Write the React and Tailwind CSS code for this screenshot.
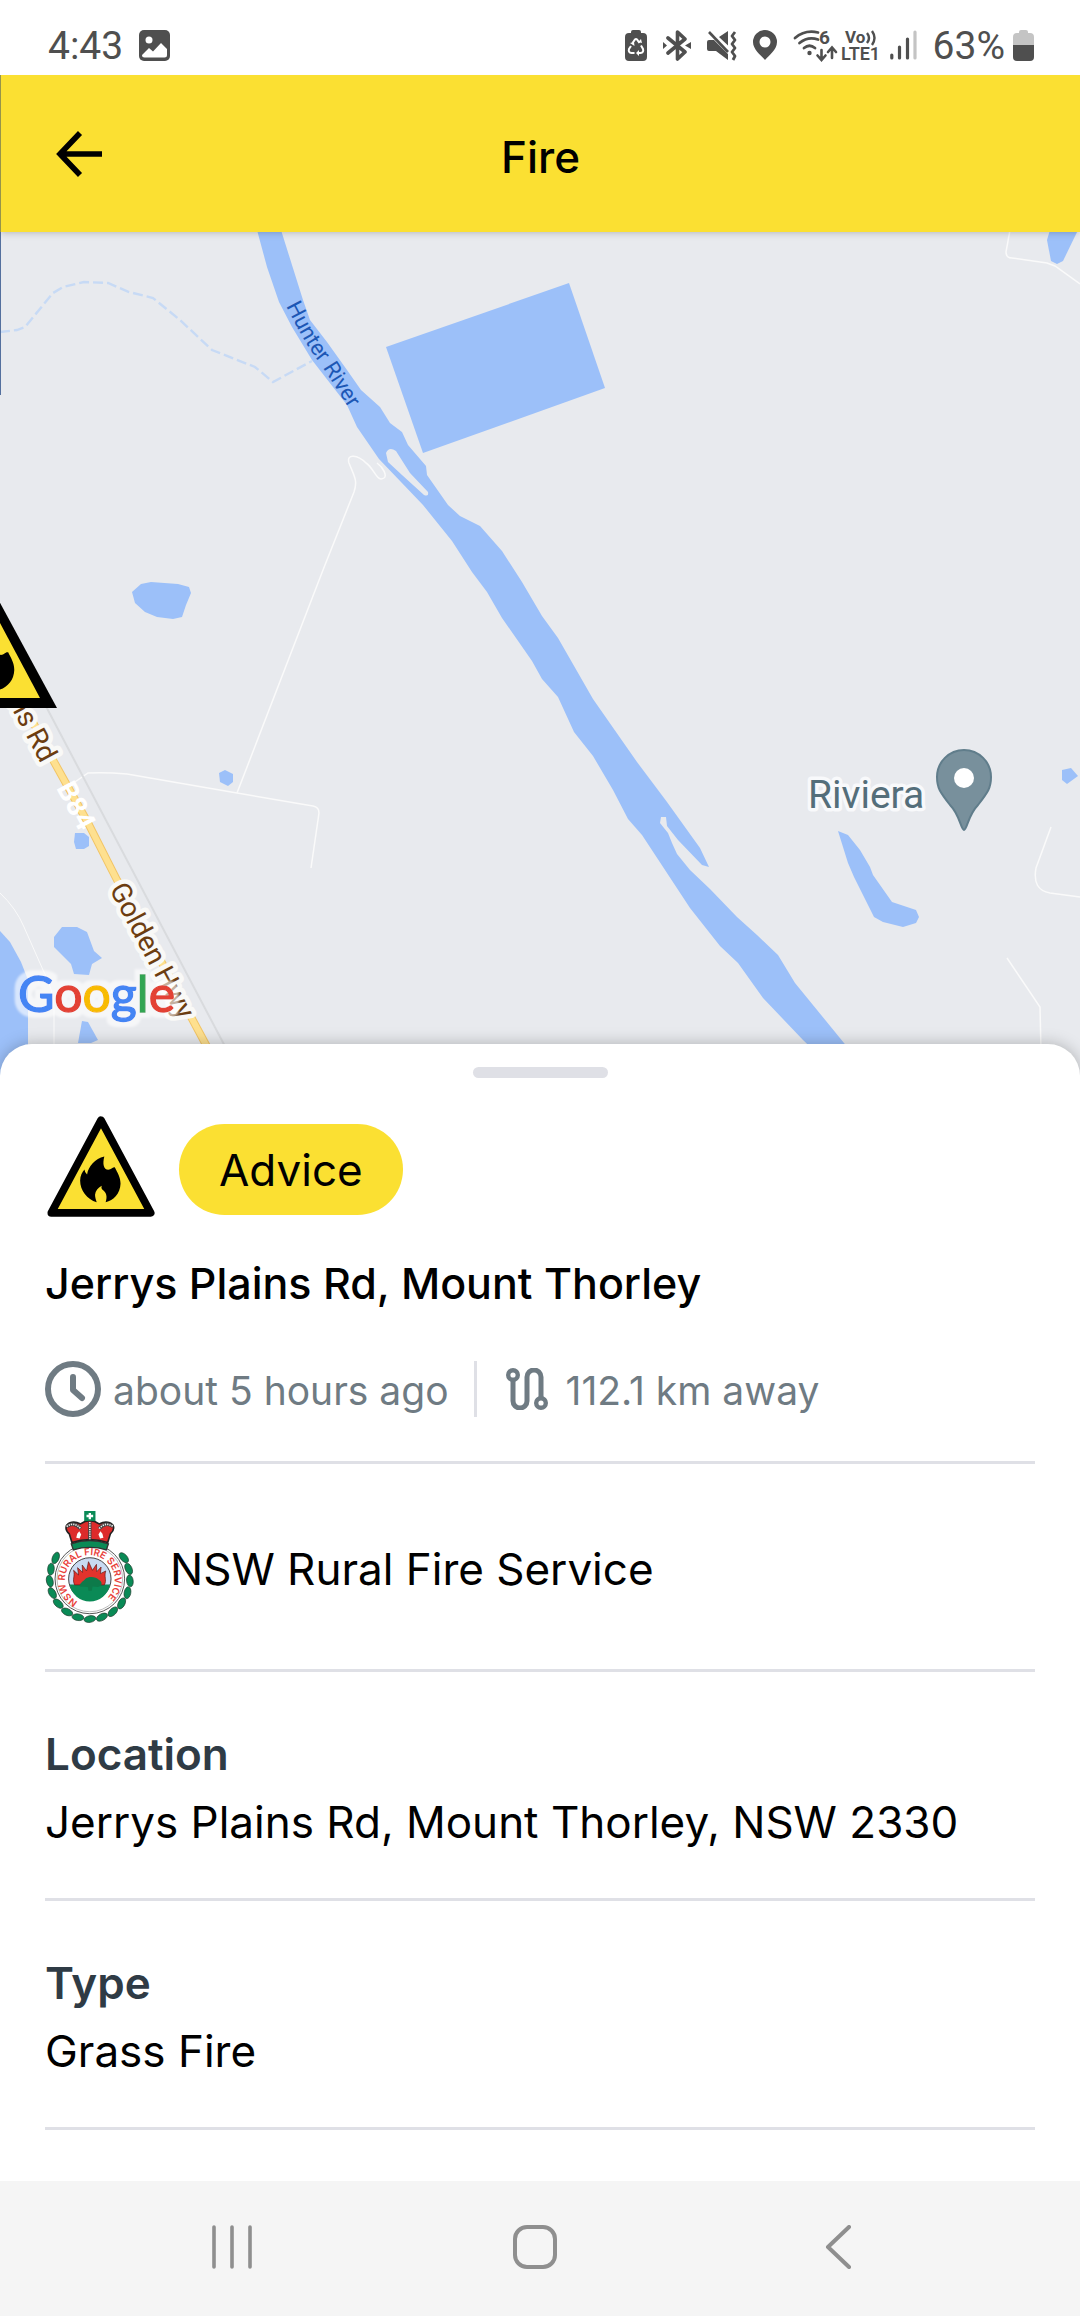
const water = '#9cc0f9'

function StatusBar () {
    return (
        <div className="flex h-[75px] items-center justify-between bg-white pt-4 pr-[46px] pl-12 font-[Roboto,sans-serif] text-[#4f4f4f]">
            <div className="flex items-center gap-4">
                <span className="text-[39px] leading-8">4:43</span>
                <svg viewBox="0 0 31 31" className="size-[31px]" aria-hidden="true">
                    <rect width="31" height="31" rx="5" fill="currentColor" />
                    <circle cx="10" cy="10" r="3.5" fill="#fff" />
                    <path d="M3 25 L10 18 L14 21.500 L22 13 L28 19 V25 Q28 27.500 25.500 27.500 H5.500 Q3 27.500 3 25Z" fill="#fff" />
                </svg>
            </div>
            <div className="flex items-center gap-4">
                <svg viewBox="0 0 22 31" className="h-[31px] w-[22px]" aria-hidden="true">
                    <path d="M6 3 V2 Q6 0 8 0 H14 Q16 0 16 2 V3 H18 Q22 3 22 7 V27 Q22 31 18 31 H4 Q0 31 0 27 V7 Q0 3 4 3Z" fill="currentColor" />
                    <g fill="none" stroke="#fff" strokeWidth="2">
                        <path d="M7.500 13 L10 9.500 Q11 8.500 12 9.500 L14.500 13" />
                        <path d="M16 15.500 L18 19 Q19 22.500 15.500 23 H13" />
                        <path d="M9.500 23 H6.500 Q3 22.500 4 19 L6 16" />
                    </g>
                    <path d="M5 13 L9 12 L9.500 16Z M14 20 L11 23 L14 26Z M13 12 L17 13 L16 9Z" fill="#fff" />
                </svg>
                <svg viewBox="0 0 28 31" className="h-[31px] w-7" aria-hidden="true">
                    <path d="M5 8 L22 22 L14.500 29 V2 L22 9 L5 23" fill="none" stroke="currentColor" strokeWidth="3.600" strokeLinecap="round" strokeLinejoin="round" />
                    <path d="M0 12 L4 15.500 L0 19Z M28 12 L22 15.500 L28 19Z" fill="currentColor" />
                </svg>
                <svg viewBox="0 0 30 31" className="h-[31px] w-[30px]" aria-hidden="true">
                    <path d="M0 12 Q0 10 2 10 H7 L21 24 V30 L9 21 H2 Q0 21 0 19Z M12 7 L21 1 V15.500Z" fill="currentColor" />
                    <path d="M2 2 L21 22" stroke="currentColor" strokeWidth="2.600" />
                    <path d="M28 2 L25 6 L28 10 L25 14 L28 18 L25 22 L28 26 L26 30" fill="none" stroke="currentColor" strokeWidth="2.800" strokeLinejoin="round" />
                </svg>
                <svg viewBox="0 0 24 31" className="h-[31px] w-6" aria-hidden="true">
                    <path d="M12 0 A12 12 0 0 1 24 12 C24 20 15 26 12 30 C9 26 0 20 0 12 A12 12 0 0 1 12 0Z M12 6.500 A5.500 5.500 0 1 0 12 17.500 A5.500 5.500 0 1 0 12 6.500Z" fill="currentColor" fillRule="evenodd" />
                </svg>
                <div className="flex items-center gap-1">
                    <svg viewBox="0 0 45 31" className="h-[31px] w-[45px] overflow-visible" aria-label="Wi-Fi 6">
                        <g fill="none" stroke="currentColor" strokeWidth="2.800" strokeLinecap="round">
                            <path d="M2 8 Q12 -0.500 25 2.500" />
                            <path d="M6.500 13 Q15 6 25 9.500" />
                            <path d="M11 18 Q16.500 13.500 22 18" />
                            <path d="M28.500 20 V29 M24.500 25.500 L28.500 30 L32.500 25.500 M39 28 V18.500 M35 22 L39 17.500 L43 22" strokeWidth="2.600" />
                        </g>
                        <circle cx="16.500" cy="23" r="2.200" fill="currentColor" />
                        <text x="26" y="14" fontSize="19" fontWeight="700" fill="currentColor">6</text>
                    </svg>
                    <svg viewBox="0 0 38 31" className="h-[31px] w-[38px] overflow-visible" aria-label="VoLTE 1">
                        <text x="3" y="13" fontSize="17" fontWeight="700" fill="currentColor">Vo</text>
                        <path d="M25 3 Q29 8 25 13 M30 1 Q35 8 30 15" fill="none" stroke="currentColor" strokeWidth="2.400" />
                        <text x="-1" y="30" fontSize="18" fontWeight="600" fill="currentColor">LTE1</text>
                    </svg>
                    <svg viewBox="0 0 27 31" className="ml-1.5 h-[31px] w-[27px]" aria-hidden="true">
                        <g stroke="currentColor" strokeWidth="3.200" strokeLinecap="round">
                            <path d="M1.800 25 V28 M9.500 17 V28 M17.500 9 V28" />
                            <path d="M25 2 V28" stroke="#c4c4c4" />
                        </g>
                    </svg>
                </div>
                <span className="text-[39px] leading-8">63%</span>
                <svg viewBox="0 0 21 31" className="-ml-2 h-[31px] w-[21px]" aria-hidden="true">
                    <path d="M6 3 V2 Q6 0 8 0 H13 Q15 0 15 2 V3 H17 Q21 3 21 7 V16 H0 V7 Q0 3 4 3Z" fill="#c4c4c4" />
                    <path d="M0 15 H21 V27 Q21 31 17 31 H4 Q0 31 0 27Z" fill="currentColor" />
                </svg>
            </div>
        </div>
    )
}

function Header () {
    return (
        <header className="relative z-10 flex h-[157px] items-center border-l border-[#96944a] bg-[#fbe032] px-12 shadow-md">
            <button type="button" aria-label="Back" className="flex size-16 items-center pl-[7px]">
                <svg viewBox="0 0 46 46" className="size-[46px]">
                    <path d="M24 2 L4 23 L24 44 M4 23 H46" fill="none" stroke="#000" strokeWidth="5.600" />
                </svg>
            </button>
            <h1 className="flex-1 pt-1.5 text-center text-[44px] leading-[60px] font-medium">Fire</h1>
            <div className="w-16"></div>
        </header>
    )
}

function Flame () {
    return (
        <path d="M224 168 C218 190 222 208 236 208 C246 208 249 198 256 201 C264 217 273 231 273 250 C272 280 252 300 228 306 C234 288 230 276 217 267 Q214 262 216 256 C205 262 197 271 196 283 C196 292 199 299 201 306 C172 297 151 270 151 240 C151 226 157 216 164 207 Q165 217 172 222 C176 197 196 175 224 168Z" />
    )
}

function WarningIcon () {
    return (
        <svg viewBox="51 46 326 304" className="h-[101px] w-[108px]" role="img" aria-label="Fire warning">
            <path d="M214 58 L364 338 H64Z" fill="#fbe032" stroke="#000" strokeWidth="23" strokeLinejoin="round" />
            <Flame />
        </svg>
    )
}

function IncidentMap () {
    return (
        <svg viewBox="0 232 1080 856" preserveAspectRatio="xMidYMid slice" className="block h-[856px] w-full bg-[#e8eaee] font-[Roboto,sans-serif]" role="img" aria-label="Map of the incident">
            <defs>
                <filter id="halo" x="-10%" y="-20%" width="120%" height="140%">
                    <feMorphology in="SourceAlpha" operator="dilate" radius="5" result="wide" />
                    <feGaussianBlur in="wide" stdDeviation="1" result="soft" />
                    <feFlood floodColor="#fff" floodOpacity="0.6" />
                    <feComposite in2="soft" operator="in" result="back" />
                    <feMerge>
                        <feMergeNode in="back" />
                        <feMergeNode in="SourceGraphic" />
                    </feMerge>
                </filter>
                <path id="river-name" d="M286 306 L297 327 Q309 350 320 363 L348 407 L362 430" />
            </defs>

            {/* water */}
            <g fill={water}>
                <path d="M257 230 L267 267 L279 302 L292 327 L312 360 L347 405 L357 427 L379 459 L423 505 L452 541 L472 572 L487 592 L502 618 L532 661 L542 679 L558 697 L574 732 L593 756 L613 790 L628 819 L642 835 L690 908 L720 946 L738 963 L763 998 L803 1040 L830 1066 H862 L844 1043 L795 983 L778 955 L757 935 L737 917 L710 889 L690 870 L677 854 L672 843 L668 833 L660 823 L661 817 H666 L667 826 L678 840 L702 865 L709 867 L700 848 L667 802 L637 762 L593 699 L558 638 L542 616 L522 582 L502 551 L480 526 L460 516 L448 505 L427 475 L426 466 L408 445 L402 432 L390 423 L380 407 L361 390 L347 370 L327 342 L310 320 L303 300 L281 230Z" />
                <path d="M569 283 L605 388 L423 453 L386 347Z" />
                <path d="M132 592 L141 584 L151 582 L178 584 L189 587 L191 593 L186 605 L182 617 L173 619 L157 617 L145 612 L135 603Z" />
                <path d="M219 773 L225 770 L233 774 V782 L228 786 L220 782Z" />
                <path d="M75 833 H84 L89 837 V846 L84 849 H76 L74 842Z" />
                <path d="M62 927 H77 L87 932 L94 951 L102 958 L92 964 L89 975 L74 974 L71 964 L54 947 V937Z" />
                <path d="M0 931 L10 942 L21 962 L28 980 V1100 H0Z" />
                <path d="M82 1021 L88 1022 L98 1040 L91 1043 H78Z" />
                <path d="M838 831 L848 835 L860 850 L870 867 L873 875 L892 902 L916 910 L919 917 L916 923 L903 927 L883 922 L874 917 L854 877 L848 863 L843 847Z" />
                <path d="M1062 770 L1071 768 L1078 776 L1067 784 L1062 780Z" />
                <path d="M1050 230 L1047 240 L1051 261 L1057 264 L1063 261 L1078 230Z" />
            </g>
            <path d="M386 453 Q389 446 396 451 L410 473 L428 492 Q429 497 424 495 L402 475 L388 462Z" fill="#e8eaee" />
            <path d="M0 332 L17 330 L25 327 L53 293 L63 287 L84 282 L108 283 L129 292 L153 298 L180 320 L212 350 L255 367 L273 382 L312 361" fill="none" stroke="#c7daf5" strokeWidth="2.400" strokeDasharray="10 4" />

            {/* tracks and roads */}
            <g fill="none" stroke="#fafafa" strokeWidth="1.500">
                <path d="M377 463 C384 468 387 476 384 478 C377 483 374 468 366 463 C358 455 346 453 349 463 C354 476 358 480 354 492 L323 570 L237 793" />
                <path d="M72 784 L88 773 Q105 772 127 774 L237 793 L313 806 Q319 807 319 813 L311 868" />
                <path d="M0 893 Q16 908 24 927 L43 970 Q54 990 54 1010 V1050" strokeWidth="1" />
                <path d="M1051 827 L1036 868 Q1032 890 1050 893 L1080 897" />
                <path d="M1007 958 L1040 1007 L1041 1050" />
                <path d="M1010 230 L1006 252 Q1006 258 1012 258 L1047 263 L1055 266 L1080 284" />
            </g>
            <path d="M40 695 L228 1052" stroke="#d9dbde" strokeWidth="2" />
            <path d="M18 694 L53 760 L88 823 L117 880 L162 963 L212 1056" fill="none" stroke="#f2c566" strokeWidth="8" />
            <path d="M18 694 L53 760 L88 823 L117 880 L162 963 L212 1056" fill="none" stroke="#fee08f" strokeWidth="6" />

            {/* labels */}
            <text fontSize="22" fill="#1c57b5">
                <textPath href="#river-name">Hunter River</textPath>
            </text>
            <g fontSize="28" fill="#6c3d10" stroke="#f9f9f7" strokeWidth="9" strokeLinejoin="round" className="[paint-order:stroke]">
                <text textAnchor="end" transform="translate(41 764) rotate(62)">ns Rd</text>
                <text transform="translate(109 889) rotate(62)">Golden Hwy</text>
            </g>
            <text transform="translate(56 788) rotate(62)" fontSize="28" fill="#fff" fontWeight="700">B84</text>
            <text x="808" y="808" fontSize="39" fill="#546e7a" stroke="#f8f9fb" strokeWidth="7" strokeLinejoin="round" className="[paint-order:stroke]">Riviera</text>
            <path d="M964 830 C961 830 960 815 950 805 C940 792 937 788 937 777 A27 27 0 0 1 991 777 C991 788 988 792 978 805 C968 815 967 830 964 830Z" fill="#78909c" stroke="#607d8b" strokeWidth="2" />
            <circle cx="964" cy="778" r="10" fill="#fff" />

            {/* incident marker */}
            <path d="M-74 708 L-9 586 L57 708Z" />
            <path d="M-58 698 L-9 606 L40 698Z" fill="#fbe032" />
            <g transform="translate(-84 580) scale(0.360)">
                <Flame />
            </g>
            <path d="M0 232 V395" stroke="#54709e" strokeWidth="2" />

            <text x="18" y="1012" fontSize="50" strokeWidth="1.400" filter="url(#halo)" className="font-[Lato,sans-serif]">
                <tspan fill="#4485f4" stroke="#4485f4">G</tspan>
                <tspan fill="#e34234" stroke="#e34234">o</tspan>
                <tspan fill="#f8bb05" stroke="#f8bb05">o</tspan>
                <tspan fill="#4485f4" stroke="#4485f4">g</tspan>
                <tspan fill="#33a553" stroke="#33a553">l</tspan>
                <tspan fill="#e34234" stroke="#e34234">e</tspan>
            </text>
        </svg>
    )
}

function Crest () {
    const leaves = Array.from({ length: 15 }, (_, i) => -32 + i * 17.4)

    return (
        <svg viewBox="47 60 268 344" className="h-[114px] w-[89px]" role="img" aria-label="NSW Rural Fire Service crest">
            <path id="crest-ring" d="M146 337 A75 75 0 1 1 218 337" fill="none" />
            {leaves.map((angle) => (
                <g key={angle} transform={`translate(182 268) rotate(${angle})`}>
                    <ellipse cx="121" cy="0" rx="10" ry="18" transform="rotate(-10 121 0)" fill="#0a8a56" stroke="#1c3b2c" strokeWidth="2" />
                </g>
            ))}
            <circle cx="182" cy="268" r="105" fill="#fff" stroke="#555" strokeWidth="3" />
            <circle cx="182" cy="268" r="99" fill="none" stroke="#999" strokeWidth="2" />
            <text fontSize="29" fill="#e8413a" className="font-semibold">
                <textPath href="#crest-ring">NSW RURAL FIRE SERVICE</textPath>
            </text>
            <circle cx="182" cy="268" r="64" fill="#c8daf2" stroke="#444" strokeWidth="3" />
            <path d="M121 285 H243 A62 62 0 0 1 121 285Z" fill="#0a8a56" />
            <path d="M136 286 C128 268 138 262 133 242 L148 256 L145 234 L160 248 L159 226 L172 244 L178 216 L190 242 L202 224 L203 246 L216 232 L214 252 L230 244 C224 262 234 270 226 286Z" fill="#e2332d" stroke="#5d1512" strokeWidth="2" />
            <path d="M152 291 C150 280 162 276 168 268 C180 258 202 262 208 270 C222 276 220 292 206 292 L190 291 L188 304 H178 L176 292Z" fill="#0d7a4a" />
            {/* crown */}
            <path d="M126 162 Q180 142 238 162 L232 180 Q182 166 132 180Z" fill="#0a8a56" stroke="#333" strokeWidth="4" />
            <path d="M128 158 L120 132 Q106 120 112 106 Q128 90 154 102 Q182 82 210 102 Q236 90 252 106 Q258 120 244 132 L236 158 Q182 140 128 158Z" fill="#dd2b2b" stroke="#222" strokeWidth="5" />
            <path d="M112 110 Q134 94 154 116 M210 116 Q230 94 252 110 M182 96 V148" fill="none" stroke="#444" strokeWidth="10" />
            <path d="M112 110 Q134 94 154 116 M210 116 Q230 94 252 110 M182 96 V148" fill="none" stroke="#eee" strokeWidth="5" strokeDasharray="4 3" />
            <path d="M150 124 L156 134 L151 146 L141 144 L144 132Z M214 124 L208 134 L213 146 L223 144 L220 132Z" fill="#fff" />
            <rect x="165" y="63" width="34" height="30" fill="#0a8a56" />
            <path d="M182 69 V88 M172 78 H192" stroke="#fff" strokeWidth="7" />
        </svg>
    )
}

function Detail ({ label, value }) {
    return (
        <div className="border-b-[3px] border-[#dfe0e6] pt-12 pb-[42px] text-[44px] leading-[68px]">
            <dt className="font-semibold text-[#2f3b45]">{label}</dt>
            <dd>{value}</dd>
        </div>
    )
}

function IncidentSheet () {
    return (
        <main className="relative -mt-11 flex-1 rounded-t-[32px] bg-white px-[45px] pt-[23px] shadow-[0_0_16px_rgba(0,0,0,0.25)]">
            <div className="mx-auto h-[11px] w-[135px] rounded-full bg-[#dfe0e6]"></div>
            <div className="mt-[38px] flex items-end gap-6 pl-0.5">
                <WarningIcon />
                <span className="mb-0.5 rounded-full bg-[#fbe032] px-10 pt-4 pb-[15px] text-[44px] leading-[60px]">Advice</span>
            </div>
            <h2 className="mt-9 text-[43px] leading-[60px] font-medium">Jerrys Plains Rd, Mount Thorley</h2>
            <div className="mt-12 flex h-14 items-center text-[39px] leading-[56px] text-[#6f7b83]">
                <svg viewBox="0 0 56 56" className="size-14" aria-hidden="true">
                    <circle cx="28" cy="28" r="25" fill="none" stroke="currentColor" strokeWidth="6" />
                    <path d="M28 16 V29 L37 37" fill="none" stroke="currentColor" strokeWidth="6" strokeLinecap="round" strokeLinejoin="round" />
                </svg>
                <span className="pt-1 pl-3">about 5 hours ago</span>
                <div className="mx-[25px] h-14 w-[3px] bg-[#dfe0e6]"></div>
                <svg viewBox="0 0 42 42" className="ml-1 size-[42px]" aria-hidden="true">
                    <path d="M7 11 V33 A7 7 0 0 0 21 33 V9 A7 7 0 0 1 35 9 V31" fill="none" stroke="currentColor" strokeWidth="5" />
                    <circle cx="7" cy="7" r="4.800" fill="#fff" stroke="currentColor" strokeWidth="4.400" />
                    <circle cx="35" cy="35" r="4.800" fill="#fff" stroke="currentColor" strokeWidth="4.400" />
                </svg>
                <span className="pt-1 pl-[18px]">112.1 km away</span>
            </div>
            <div className="mt-11 flex h-[211px] items-center gap-9 border-y-[3px] border-[#dfe0e6]">
                <Crest />
                <span className="pt-1 text-[44px] leading-[60px]">NSW Rural Fire Service</span>
            </div>
            <dl>
                <Detail label="Location" value="Jerrys Plains Rd, Mount Thorley, NSW 2330" />
                <Detail label="Type" value="Grass Fire" />
            </dl>
        </main>
    )
}

function NavBar () {
    return (
        <nav className="relative flex h-[135px] items-center bg-[#f5f5f5] pr-[90px] pl-20 pb-1 text-[#8f8f8f]">
            <button type="button" aria-label="Recent apps" className="flex flex-1 justify-center">
                <svg viewBox="0 0 44 44" className="size-11">
                    <path d="M4 2 V42 M22 2 V42 M40 2 V42" stroke="currentColor" strokeWidth="3.600" strokeLinecap="round" />
                </svg>
            </button>
            <button type="button" aria-label="Home" className="flex flex-1 justify-center">
                <svg viewBox="0 0 44 44" className="size-11">
                    <rect x="2" y="2" width="40" height="40" rx="12" fill="none" stroke="currentColor" strokeWidth="4" />
                </svg>
            </button>
            <button type="button" aria-label="Back" className="flex flex-1 justify-center">
                <svg viewBox="0 0 44 44" className="size-11">
                    <path d="M33 2 L12 22 L33 42" fill="none" stroke="currentColor" strokeWidth="4" strokeLinecap="round" strokeLinejoin="round" />
                </svg>
            </button>
        </nav>
    )
}

export default function App () {
    return (
        <div className="flex min-h-screen flex-col overflow-x-hidden bg-white font-[Inter,sans-serif] text-black">
            <StatusBar />
            <Header />
            <IncidentMap />
            <IncidentSheet />
            <NavBar />
        </div>
    )
}
